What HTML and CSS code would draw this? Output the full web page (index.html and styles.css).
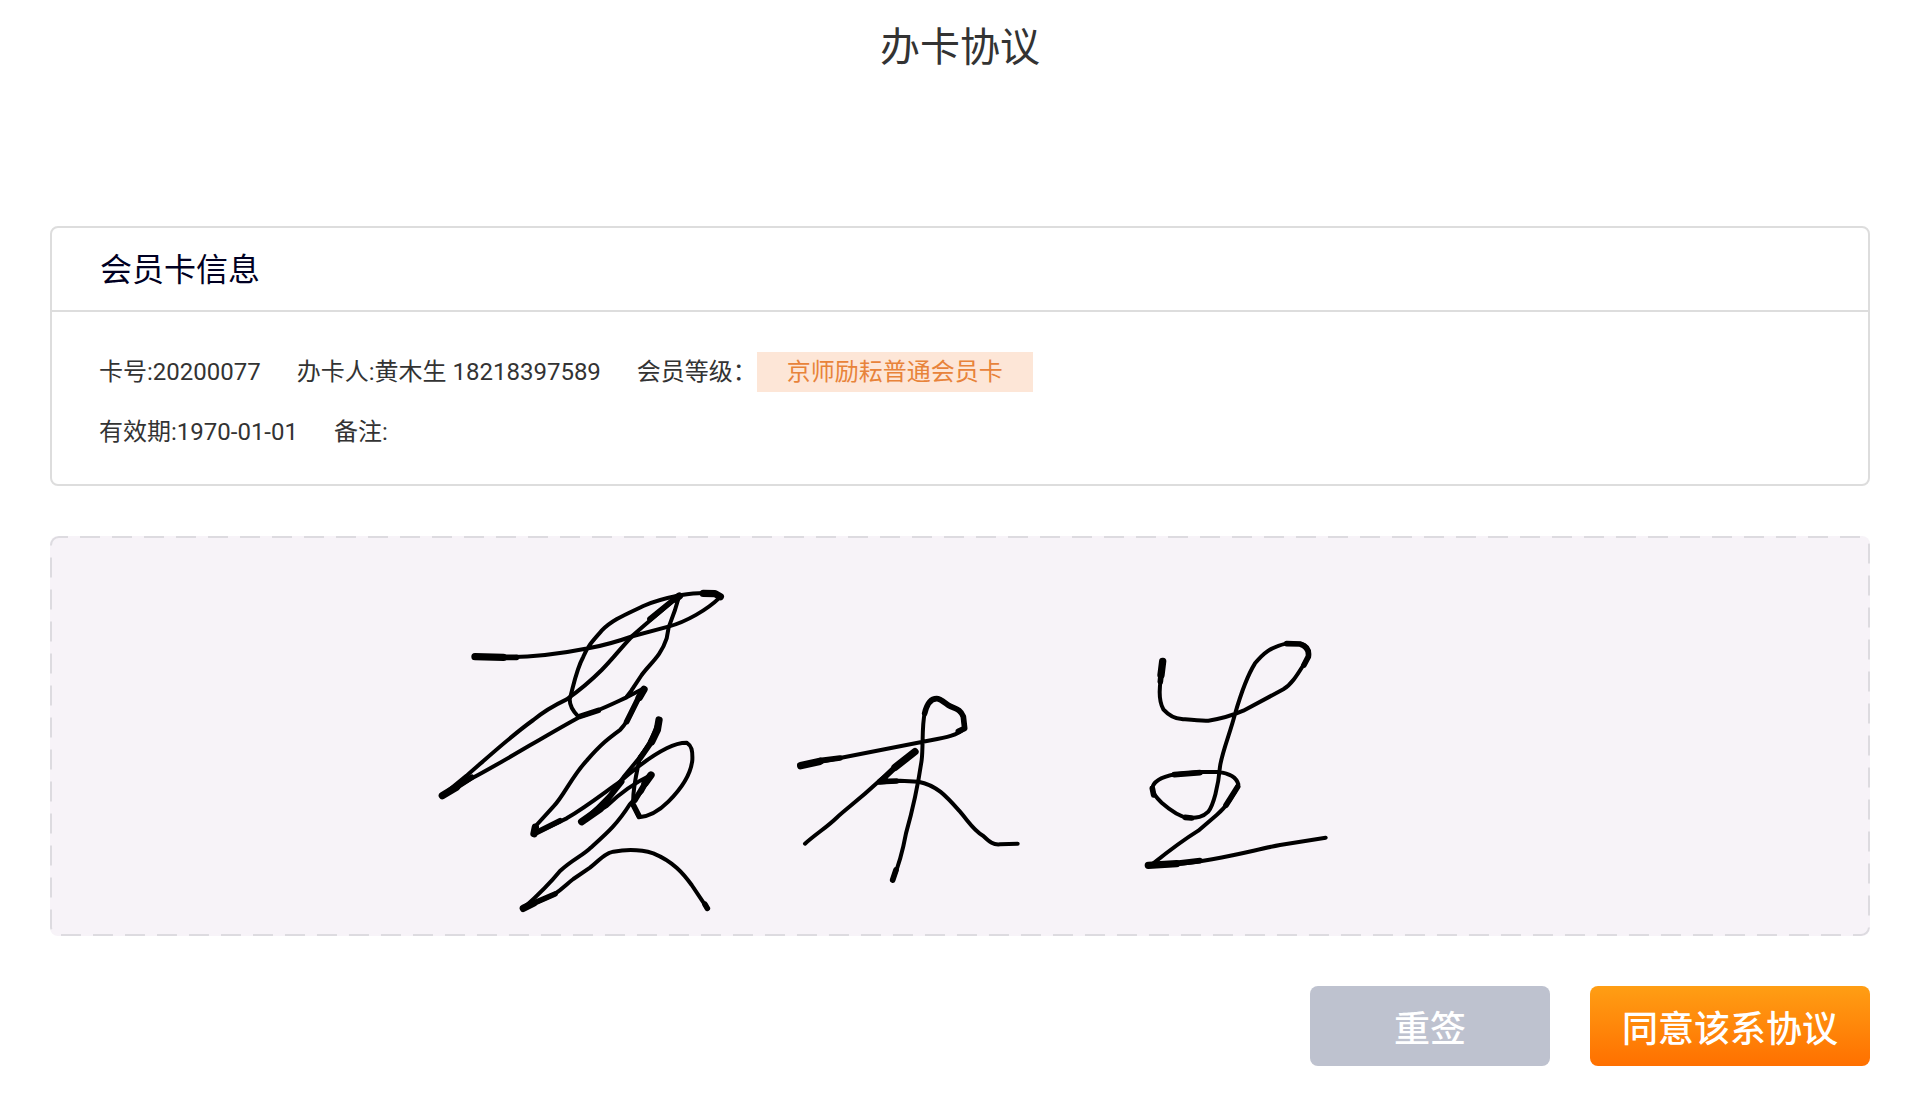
FILE: index.html
```html
<!DOCTYPE html>
<html lang="zh-CN">
<head>
  <meta charset="UTF-8">
  <title>办卡协议</title>
  <link rel="stylesheet" href="styles.css">
</head>
<body>

<h1 class="page-title">办卡协议</h1>

<main class="content">
  <section class="card">
    <h2 class="card-title">会员卡信息</h2>
    <div class="card-body">
      <div class="row">
        <span>卡号:20200077</span>
        <span>办卡人:黄木生 18218397589</span>
        <span class="level">会员等级：<span class="badge">京师励耘普通会员卡</span></span>
      </div>
      <div class="row">
        <span>有效期:1970-01-01</span>
        <span>备注:</span>
      </div>
    </div>
  </section>

  <svg class="sign-pad" role="img" aria-label="签名">
    <rect class="pad-border" x="1" y="1" rx="8"/>

    <!-- 黄 -->
    <svg x="370" y="34" width="330" height="360" viewBox="0 0 990 1080">
      <g class="pen">
        <path d="M165 260 L250 262 C350 262 430 250 505 235 C560 225 600 212 640 198 L745 170 C800 155 860 120 900 82 C890 65 870 69 850 69 C830 69 805 72 780 76 C740 84 700 95 670 108 C620 132 575 150 545 182 C520 210 500 232 490 260 C468 300 460 350 449 388 C449 410 460 425 475 440 C510 435 560 410 620 382 L672 355"/>
        <path d="M778 76 C740 110 690 150 640 195 C610 225 580 265 545 300 C510 335 480 360 440 388 C400 407 370 425 340 450 C270 500 200 565 140 617 L67 677 L150 628 C260 570 370 500 475 443"/>
        <path d="M778 76 L765 120 L746 172 L740 205 C722 260 690 280 665 315 L634 362 L620 380"/>
        <path d="M672 355 L645 405 C630 440 615 465 600 480 C570 502 545 520 500 572 C455 620 430 680 400 710 L347 768 L342 792 L440 745 C500 710 550 670 600 635 C640 600 690 560 740 535 C765 522 785 518 800 518 C815 528 818 540 817 570 C812 620 780 660 745 695 C710 730 680 740 657 742 L640 705 C636 660 650 610 660 560 L690 520 L717 450"/>
        <path d="M717 450 L712 480 L665 555 L610 622 L570 675 L530 715 L485 755 L560 708 C600 670 640 640 693 615 L665 665 L630 702 C590 765 560 790 510 835 C490 855 455 870 420 903 C390 940 360 970 310 1015 L400 975 C430 955 440 942 460 927 L510 893 C540 870 550 852 580 845 C620 838 660 838 700 850 C760 875 790 910 815 945 L862 1015"/>
      </g>
      <g class="ink">
        <path d="M165 260 L250 262 M778 78 L765 87 M850 70 L885 71 L901 80"/>
        <path d="M67 677 L110 651 M485 755 L540 717 M342 791 L346 772 M310 1015 L340 1000 M717 450 L712 480 L695 515 M693 615 L675 640 M672 358 L658 382"/>
        <path class="thin" d="M765 86 L690 147 M250 262 L290 262 M110 651 L155 622 M655 385 L620 455 M695 515 L660 565 M540 717 L605 635 M675 640 L645 690 M342 791 L420 752 M340 1000 L405 972 M640 705 L657 738 M855 1003 L862 1015 M480 439 L535 421"/>
      </g>
    </svg>

    <!-- 木 -->
    <svg x="730" y="144" width="260" height="220" viewBox="0 0 780 660">
      <g class="pen">
        <path d="M62 257 L180 234 L425 186 C480 175 530 170 553 145 L550 110 C540 85 520 85 505 75 C490 65 480 55 470 56 C450 56 440 75 434 100 C425 140 430 200 425 240 C415 310 395 400 378 460 C365 530 355 560 338 600"/>
        <path d="M405 215 L295 305 C230 365 200 385 170 413 C140 442 110 460 75 491"/>
        <path d="M295 308 L360 302 L415 305 C470 315 500 350 540 395 C570 430 580 450 610 468 C630 487 640 495 660 493 L713 491"/>
      </g>
      <g class="ink">
        <path d="M62 257 L120 244 M405 215 L345 262"/>
        <path class="thin" d="M120 242 L180 234 M345 262 L300 305 L350 303 M434 100 C440 75 450 56 470 56 C480 56 490 65 505 76 C525 87 540 85 550 110 L554 145 L535 154 M348 570 L338 600"/>
      </g>
    </svg>

    <!-- 生 -->
    <svg x="1070" y="84" width="230" height="260" viewBox="0 0 690 780">
      <g class="pen">
        <path d="M128 122 L122 180 C116 220 120 250 130 268 C150 290 165 296 185 297 C215 300 240 303 265 302 C300 297 340 285 370 272 L490 208 C520 190 540 150 565 112 C572 90 555 72 540 71 L500 70 C450 82 430 100 405 130 C380 170 360 230 345 282 C330 340 305 400 300 440 C295 500 280 555 265 575 C245 595 225 593 205 594 C180 590 150 570 125 548 C100 525 97 515 97 505 C100 480 140 468 165 463 L240 456 L295 456 C330 460 350 475 355 493 C345 520 320 560 290 585 L235 632 C190 660 150 690 100 730"/>
        <path d="M85 735 L180 731 C300 720 400 690 480 675 L617 653"/>
      </g>
      <g class="ink">
        <path d="M128 124 L123 165 M85 736 L170 731"/>
        <path class="thin" d="M123 165 L121 185 M170 730 L240 722 M163 464 L240 458 M500 71 L540 72 C560 78 568 90 565 110 L552 135 M97 505 L101 525 M195 592 L215 594 M353 500 L318 556"/>
      </g>
    </svg>
  </svg>

  <div class="actions">
    <button type="button" class="btn btn-reset">重签</button>
    <button type="button" class="btn btn-agree">同意该系协议</button>
  </div>
</main>

</body>
</html>
```
FILE: styles.css
```css
* {
  box-sizing: border-box;
}
body {
  margin: 0;
  background: #fff;
  color: #333;
  font-family: Roboto, "Noto Sans CJK SC", sans-serif;
  font-size: 24px;
}
.page-title {
  margin: 0;
  padding: 16px 0;
  font-size: 40px;
  font-weight: 400;
  line-height: 64px;
  text-align: center;
}
.content {
  padding: 130px 50px 50px;
}
.card {
  border: 2px solid #ddd;
  border-radius: 8px;
}
.card-title {
  margin: 0;
  padding: 18px 48px 16px;
  border-bottom: 2px solid #ddd;
  color: #000022;
  font-size: 32px;
  font-weight: 400;
  line-height: 48px;
}
.card-body {
  display: flex;
  flex-direction: column;
  gap: 20px;
  padding: 40px 47px 32px;
}
.row {
  display: flex;
  align-items: center;
  gap: 36px;
  line-height: 40px;
}
.level {
  display: flex;
}
.badge {
  padding: 0 30px;
  background: #fde6d7;
  color: #e8833a;
}
.sign-pad {
  display: block;
  width: 100%;
  height: 400px;
  margin-top: 50px;
  border-radius: 8px;
  background: #f7f3f8;
}
.pad-border {
  width: calc(100% - 2px);
  height: calc(100% - 2px);
  fill: none;
  stroke: #dddbe0;
  stroke-width: 2px;
  stroke-dasharray: 20 12;
  stroke-dashoffset: 11px;
}
.pen,
.ink {
  fill: none;
  stroke: #000;
  stroke-width: 12px;
  stroke-linecap: round;
  stroke-linejoin: round;
}
.ink {
  stroke-width: 22px;
}
.ink .thin {
  stroke-width: 17px;
}
.actions {
  display: flex;
  justify-content: flex-end;
  gap: 40px;
  margin-top: 50px;
}
.btn {
  height: 80px;
  border: 0;
  border-radius: 8px;
  color: #fff;
  font-family: inherit;
  font-size: 36px;
  font-weight: 500;
  cursor: pointer;
}
.btn-reset {
  width: 240px;
  background: #bec2cf;
}
.btn-agree {
  width: 280px;
  background: linear-gradient(#ff9e14, #ff7000);
}
```
